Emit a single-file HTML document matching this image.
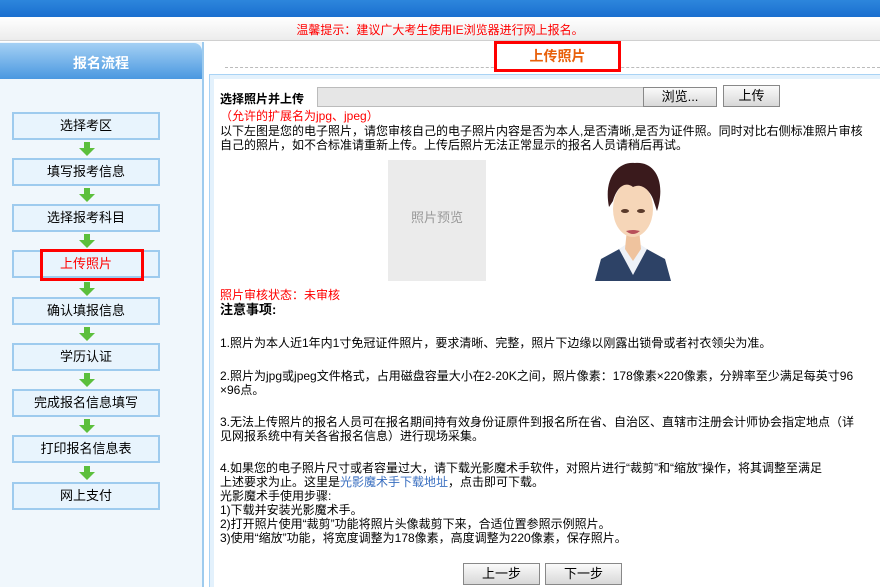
<!DOCTYPE html>
<html><head><meta charset="utf-8"><style>
*{margin:0;padding:0;box-sizing:border-box}
body{width:880px;height:587px;overflow:hidden;background:#fff;font-family:"Liberation Sans","Noto Sans CJK SC","WenQuanYi Zen Hei",sans-serif;font-size:12px;color:#000;position:relative}
.a{position:absolute}
.step{position:absolute;left:12px;width:148px;height:28px;border:2px solid #9ecbee;background:#e8f4fd;text-align:center;line-height:24px;font-size:13px}
.arr{position:absolute;left:79px;width:16px;height:14px}
.btn{position:absolute;border:1px solid #888;background:linear-gradient(#fafafa,#d8d8d8);text-align:center;font-size:13px}
.t{position:absolute;left:220px;width:654px;font-size:12px;line-height:14px;white-space:nowrap}
</style></head><body>
<div class="a" style="left:0;top:0;width:880px;height:17px;background:linear-gradient(#2d86dc,#1a6fcf)"></div>
<div class="a" style="left:0;top:17px;width:880px;height:24px;background:linear-gradient(#fff,#ececec);border-bottom:1px solid #d0d0d0;text-align:center;color:#f00;line-height:26px">温馨提示：建议广大考生使用IE浏览器进行网上报名。</div>
<div class="a" style="left:0;top:42px;width:204px;height:545px;background:#f0f7fc;border-right:2px solid #9ecbee"></div>
<div class="a" style="left:0;top:43px;width:202px;height:36px;background:linear-gradient(#a4d0f4,#4a98e0);border-radius:0 8px 0 0;color:#fff;font-weight:bold;font-size:14px;line-height:40px;text-align:center">报名流程</div>

<div class="step" style="top:112px">选择考区</div>
<div class="step" style="top:158px">填写报考信息</div>
<div class="step" style="top:204px">选择报考科目</div>
<div class="step" style="top:250px;color:#f00">上传照片</div>
<div class="a" style="left:40px;top:249px;width:104px;height:32px;border:3px solid #f00"></div>
<div class="step" style="top:297px">确认填报信息</div>
<div class="step" style="top:343px">学历认证</div>
<div class="step" style="top:389px">完成报名信息填写</div>
<div class="step" style="top:435px">打印报名信息表</div>
<div class="step" style="top:482px">网上支付</div>

<svg class="arr" style="top:142px" viewBox="0 0 16 14"><path d="M5 0h6v6h5l-8 8-8-8h5z" fill="#5cbf3c"/></svg>
<svg class="arr" style="top:188px" viewBox="0 0 16 14"><path d="M5 0h6v6h5l-8 8-8-8h5z" fill="#5cbf3c"/></svg>
<svg class="arr" style="top:234px" viewBox="0 0 16 14"><path d="M5 0h6v6h5l-8 8-8-8h5z" fill="#5cbf3c"/></svg>
<svg class="arr" style="top:282px" viewBox="0 0 16 14"><path d="M5 0h6v6h5l-8 8-8-8h5z" fill="#5cbf3c"/></svg>
<svg class="arr" style="top:327px" viewBox="0 0 16 14"><path d="M5 0h6v6h5l-8 8-8-8h5z" fill="#5cbf3c"/></svg>
<svg class="arr" style="top:373px" viewBox="0 0 16 14"><path d="M5 0h6v6h5l-8 8-8-8h5z" fill="#5cbf3c"/></svg>
<svg class="arr" style="top:419px" viewBox="0 0 16 14"><path d="M5 0h6v6h5l-8 8-8-8h5z" fill="#5cbf3c"/></svg>
<svg class="arr" style="top:466px" viewBox="0 0 16 14"><path d="M5 0h6v6h5l-8 8-8-8h5z" fill="#5cbf3c"/></svg>

<div class="a" style="left:225px;top:67px;width:655px;border-top:1px dashed #bbb"></div>
<div class="a" style="left:494px;top:41px;width:127px;height:31px;border:3px solid #f00;background:#fff;color:#e8600a;font-weight:bold;font-size:14px;text-align:center;line-height:25px">上传照片</div>

<div class="a" style="left:209px;top:74px;width:671px;height:513px;border:1px solid #a9d3f5;border-right:none;border-bottom:none;background:#fff;box-shadow:inset 4px 4px 0 #e3f1fc"></div>

<div class="t" style="top:92px;font-weight:bold">选择照片并上传</div>
<div class="a" style="left:317px;top:87px;width:327px;height:20px;background:#e6e6e6;border:1px solid #bbb"></div>
<div class="btn" style="left:643px;top:87px;width:74px;height:20px;line-height:18px">浏览...</div>
<div class="btn" style="left:723px;top:85px;width:57px;height:22px;line-height:20px">上传</div>
<div class="t" style="top:109px;color:#f00">（允许的扩展名为jpg、jpeg）</div>
<div class="t" style="top:124px">以下左图是您的电子照片，请您审核自己的电子照片内容是否为本人,是否清晰,是否为证件照。同时对比右侧标准照片审核<br>自己的照片，如不合标准请重新上传。上传后照片无法正常显示的报名人员请稍后再试。</div>

<div class="a" style="left:388px;top:160px;width:98px;height:121px;background:#ebebeb;color:#999;font-size:13px;text-align:center;line-height:116px">照片预览</div>
<svg class="a" style="left:595px;top:157px" width="76" height="124" viewBox="0 0 76 124">
<path d="M0 124 L6 102 L28 90 L48 90 L70 102 L76 124Z" fill="#2d4266"/>
<path d="M24 92 L38 118 L52 92 L46 88 L30 88Z" fill="#eef2f8"/>
<path d="M32 72 L44 72 L46 92 L38 104 L30 92Z" fill="#efc39e"/>
<ellipse cx="38" cy="52" rx="20" ry="28" fill="#f6d6b8"/>
<path d="M14 50 C8 20 24 4 40 6 C58 4 72 22 62 54 L58 42 C54 32 46 26 38 30 C30 24 22 30 18 44Z" fill="#3a1a1c"/>
<ellipse cx="30" cy="54" rx="4" ry="2" fill="#5a3a2a"/>
<ellipse cx="46" cy="54" rx="4" ry="2" fill="#5a3a2a"/>
<path d="M31 74 Q38 80 45 74 Q38 72 31 74Z" fill="#b8505a"/>
</svg>

<div class="t" style="top:288px;color:#f00">照片审核状态：未审核</div>
<div class="t" style="top:303px;font-weight:bold;font-size:13px">注意事项:</div>
<div class="t" style="top:336px">1.照片为本人近1年内1寸免冠证件照片，要求清晰、完整，照片下边缘以刚露出锁骨或者衬衣领尖为准。</div>
<div class="t" style="top:369px">2.照片为jpg或jpeg文件格式，占用磁盘容量大小在2-20K之间，照片像素：178像素×220像素，分辨率至少满足每英寸96<br>×96点。</div>
<div class="t" style="top:415px">3.无法上传照片的报名人员可在报名期间持有效身份证原件到报名所在省、自治区、直辖市注册会计师协会指定地点（详<br>见网报系统中有关各省报名信息）进行现场采集。</div>
<div class="t" style="top:461px">4.如果您的电子照片尺寸或者容量过大，请下载光影魔术手软件，对照片进行“裁剪”和“缩放”操作，将其调整至满足<br>上述要求为止。这里是<span style="color:#3a6fc0">光影魔术手下载地址</span>，点击即可下载。<br>光影魔术手使用步骤:<br>1)下载并安装光影魔术手。<br>2)打开照片使用“裁剪”功能将照片头像裁剪下来，合适位置参照示例照片。<br>3)使用“缩放”功能，将宽度调整为178像素，高度调整为220像素，保存照片。</div>

<div class="btn" style="left:463px;top:563px;width:77px;height:22px;line-height:20px">上一步</div>
<div class="btn" style="left:545px;top:563px;width:77px;height:22px;line-height:20px">下一步</div>
</body></html>
